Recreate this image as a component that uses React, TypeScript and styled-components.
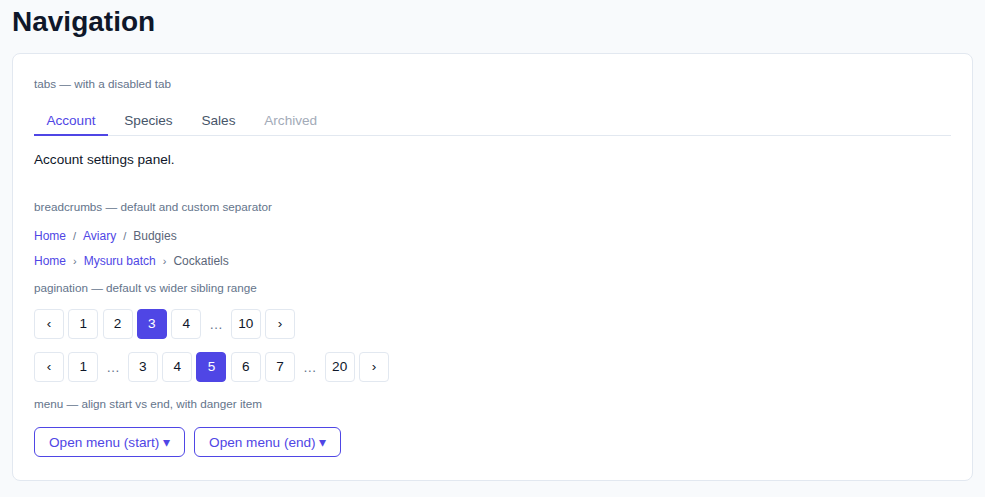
import React from "react";
import styled, { createGlobalStyle } from "styled-components";

const GlobalStyle = createGlobalStyle`
  html, body {
    margin: 0;
    background: #f8fafc;
    font-family: "Liberation Sans", Arial, sans-serif;
    color: #0f172a;
  }
`;

const Page = styled.div`
  padding: 6px 12px 16px;
`;

const Title = styled.h1`
  margin: 0 0 15px;
  font-size: 28px;
  line-height: 32px;
  font-weight: 700;
  color: #0f172a;
`;

const Card = styled.div`
  background: #ffffff;
  border: 1px solid #e2e8f0;
  border-radius: 8px;
  padding: 22px 21px 23px;
`;

const Section = styled.section<{ $gap?: number }>`
  margin-bottom: ${(p) => p.$gap ?? 0}px;
`;

const Label = styled.div<{ $space?: number }>`
  font-size: 11.7px;
  line-height: 16px;
  color: #64748b;
  margin-bottom: ${(p) => p.$space ?? 12}px;
`;

const TabList = styled.div`
  display: flex;
  gap: 4px;
  border-bottom: 1px solid #e2e8f0;
`;

const Tab = styled.button<{ $active?: boolean }>`
  background: none;
  border: none;
  border-bottom: 2px solid ${(p) => (p.$active ? "#4f46e5" : "transparent")};
  margin-bottom: -1px;
  padding: 8px 12.4px 5px;
  font-family: inherit;
  font-size: 13.6px;
  line-height: 16px;
  color: ${(p) => (p.$active ? "#4f46e5" : "#475569")};
  cursor: pointer;
  &:disabled {
    color: #a3abb8;
    cursor: not-allowed;
  }
`;

const Panel = styled.div`
  padding-top: 16px;
  font-size: 13.6px;
  line-height: 16px;
  color: #0f172a;
`;

const Crumbs = styled.nav`
  display: flex;
  flex-direction: column;
  gap: 7px;
`;

const CrumbRow = styled.ol`
  display: flex;
  align-items: center;
  list-style: none;
  margin: 0;
  padding: 0;
  font-size: 12px;
  line-height: 18px;
`;

const Crumb = styled.li<{ $current?: boolean }>`
  color: ${(p) => (p.$current ? "#5b6679" : "#4f46e5")};
`;

const Sep = styled.li`
  color: #64748b;
  margin: 0 7px;
  font-size: 11px;
`;

const PagerStack = styled.div`
  display: flex;
  flex-direction: column;
  gap: 13px;
`;

const Pager = styled.div`
  display: flex;
  align-items: center;
  gap: 4.3px;
`;

const PageButton = styled.button<{ $active?: boolean }>`
  min-width: 30px;
  height: 30px;
  padding: 0 6px;
  border: 1px solid ${(p) => (p.$active ? "#4f46e5" : "#e2e8f0")};
  border-radius: 4px;
  background: ${(p) => (p.$active ? "#4f46e5" : "#ffffff")};
  color: ${(p) => (p.$active ? "#ffffff" : "#0f172a")};
  font-family: inherit;
  font-size: 13.6px;
  line-height: 1;
  display: flex;
  align-items: center;
  justify-content: center;
  cursor: pointer;
`;

const Ellipsis = styled.span`
  width: 21px;
  text-align: center;
  color: #64748b;
  font-size: 13.6px;
`;

const MenuRow = styled.div`
  display: flex;
  gap: 9px;
`;

const MenuButton = styled.button`
  height: 30px;
  padding: 0 14px;
  border: 1px solid #4f46e5;
  border-radius: 6px;
  background: #ffffff;
  color: #4f46e5;
  font-family: inherit;
  font-size: 13.6px;
  cursor: pointer;
`;

type PageItem = number | "…";

const pagers: { items: PageItem[]; current: number }[] = [
  { items: [1, 2, 3, 4, "…", 10], current: 3 },
  { items: [1, "…", 3, 4, 5, 6, 7, "…", 20], current: 5 },
];

const crumbTrails = [
  { sep: "/", items: ["Home", "Aviary", "Budgies"] },
  { sep: "›", items: ["Home", "Mysuru batch", "Cockatiels"] },
];

export default function App() {
  return (
    <>
      <GlobalStyle />
      <Page>
        <Title>Navigation</Title>
        <Card>
          <Section $gap={31}>
            <Label $space={13}>tabs — with a disabled tab</Label>
            <TabList>
              <Tab $active>Account</Tab>
              <Tab>Species</Tab>
              <Tab>Sales</Tab>
              <Tab disabled>Archived</Tab>
            </TabList>
            <Panel>Account settings panel.</Panel>
          </Section>

          <Section $gap={10}>
            <Label>breadcrumbs — default and custom separator</Label>
            <Crumbs>
              {crumbTrails.map((trail, t) => (
                <CrumbRow key={t}>
                  {trail.items.map((item, i) => (
                    <React.Fragment key={item}>
                      {i > 0 && <Sep>{trail.sep}</Sep>}
                      <Crumb $current={i === trail.items.length - 1}>{item}</Crumb>
                    </React.Fragment>
                  ))}
                </CrumbRow>
              ))}
            </Crumbs>
          </Section>

          <Section $gap={14}>
            <Label $space={13}>pagination — default vs wider sibling range</Label>
            <PagerStack>
              {pagers.map((pager, p) => (
                <Pager key={p}>
                  <PageButton>‹</PageButton>
                  {pager.items.map((item, i) =>
                    item === "…" ? (
                      <Ellipsis key={i}>…</Ellipsis>
                    ) : (
                      <PageButton key={i} $active={item === pager.current}>
                        {item}
                      </PageButton>
                    )
                  )}
                  <PageButton>›</PageButton>
                </Pager>
              ))}
            </PagerStack>
          </Section>

          <Section>
            <Label $space={15}>menu — align start vs end, with danger item</Label>
            <MenuRow>
              <MenuButton>Open menu (start) ▾</MenuButton>
              <MenuButton>Open menu (end) ▾</MenuButton>
            </MenuRow>
          </Section>
        </Card>
      </Page>
    </>
  );
}
